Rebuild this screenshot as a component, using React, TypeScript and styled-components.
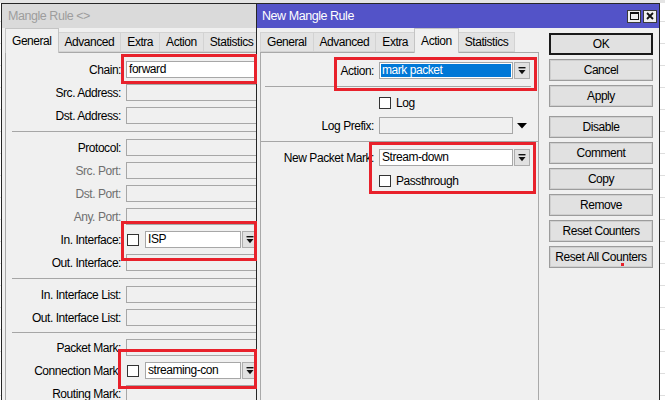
import React from 'react';
import styled, { createGlobalStyle } from 'styled-components';

const GlobalStyle = createGlobalStyle`
  html, body {
    margin: 0;
    padding: 0;
  }
  body {
    background: #ffffff;
    font-family: "Liberation Sans", Arial, sans-serif;
    font-size: 12px;
    letter-spacing: -0.45px;
    color: #000;
  }
`;

const Desktop = styled.div`
  position: relative;
  width: 665px;
  height: 400px;
  overflow: hidden;
  background:
    linear-gradient(to bottom, #e4e4e4 0 3px, transparent 3px),
    repeating-linear-gradient(to bottom, #ffffff 0 21px, #dedede 21px 22px);
`;

const Window = styled.div<{ $left: number; $width: number; $front?: boolean }>`
  position: absolute;
  top: 3px;
  left: ${(p) => p.$left}px;
  width: ${(p) => p.$width}px;
  height: 420px;
  box-sizing: border-box;
  border: 1px solid #262626;
  background: #f0f0f0;
  display: flex;
  flex-direction: column;
  z-index: ${(p) => (p.$front ? 2 : 1)};
`;

const TitleBar = styled.div<{ $active?: boolean }>`
  height: 24px;
  flex: none;
  display: flex;
  align-items: center;
  justify-content: space-between;
  padding: 0 2px 0 ${(p) => (p.$active ? 5 : 6)}px;
  background: ${(p) => (p.$active ? '#5353c8' : '#dadada')};
  color: ${(p) => (p.$active ? '#ffffff' : '#9d9d9d')};
  font-size: 12.5px;
  white-space: nowrap;
`;

const TitleButtons = styled.div`
  display: flex;
  gap: 2px;
`;

const TitleButton = styled.div`
  width: 14px;
  height: 13px;
  box-sizing: border-box;
  border: 1px solid #3a3a3a;
  background: #efefef;
  display: flex;
  align-items: center;
  justify-content: center;
`;

const Body = styled.div`
  flex: 1;
  display: flex;
  min-height: 0;
`;

const TabColumn = styled.div<{ $width?: number }>`
  margin-left: 3px;
  width: ${(p) => (p.$width ? `${p.$width}px` : 'auto')};
  flex: ${(p) => (p.$width ? 'none' : '1')};
  display: flex;
  flex-direction: column;
  min-width: 0;
`;

const TabStrip = styled.div`
  height: 24px;
  display: flex;
  align-items: flex-end;
  flex: none;
`;

const Tab = styled.div<{ $active?: boolean }>`
  position: relative;
  z-index: ${(p) => (p.$active ? 1 : 0)};
  box-sizing: border-box;
  height: ${(p) => (p.$active ? 25 : 20)}px;
  margin-bottom: ${(p) => (p.$active ? -1 : 0)}px;
  padding: 0 6px;
  display: flex;
  align-items: center;
  white-space: nowrap;
  background: ${(p) => (p.$active ? '#f0f0f0' : '#e3e3e3')};
  border: 1px solid ${(p) => (p.$active ? '#c4c4c4' : '#d3d3d3')};
  border-bottom: ${(p) => (p.$active ? 'none' : '1px solid #d3d3d3')};
  margin-right: -1px;
  flex: none;
`;

const Panel = styled.div<{ $pad: number }>`
  flex: 1;
  border: 1px solid #a9a9a9;
  border-bottom: none;
  padding-top: ${(p) => p.$pad}px;
  background: #f0f0f0;
`;

const FormRow = styled.div<{ $labelWidth: number }>`
  height: 23px;
  display: grid;
  grid-template-columns: ${(p) => p.$labelWidth}px 1fr;
  column-gap: 5px;
  align-items: center;
`;

const Label = styled.div<{ $dim?: boolean }>`
  text-align: right;
  white-space: nowrap;
  color: ${(p) => (p.$dim ? '#6f6f6f' : '#000')};
`;

const TextBox = styled.div<{ $white?: boolean; $width?: number; $selected?: boolean }>`
  box-sizing: border-box;
  height: 17px;
  width: ${(p) => (p.$width ? `${p.$width}px` : 'auto')};
  flex: ${(p) => (p.$width ? 'none' : '1')};
  border: 1px solid #a7a7a7;
  background: ${(p) => (p.$white ? '#ffffff' : '#f0f0f0')};
  padding: ${(p) => (p.$selected ? '1px' : '0 2px')};
  line-height: 15px;
  white-space: nowrap;
  overflow: hidden;
`;

const Selected = styled.div`
  height: 13px;
  line-height: 13px;
  padding: 0 1px;
  background: #0078d7;
  color: #fff;
`;

const Field = styled.div`
  display: flex;
  align-items: center;
  min-width: 0;
`;

const Box = styled.div`
  width: 12px;
  height: 12px;
  box-sizing: border-box;
  border: 1px solid #333;
  background: #fff;
  flex: none;
`;

const CheckLine = styled.label`
  display: flex;
  align-items: center;
  gap: 5px;
  white-space: nowrap;
`;

const DropButton = styled.div`
  width: 16px;
  height: 17px;
  box-sizing: border-box;
  margin-left: 1px;
  flex: none;
  border: 1px solid #adadad;
  background: #e1e1e1;
  display: flex;
  align-items: center;
  justify-content: center;
`;

const ArrowSlot = styled.div`
  width: 16px;
  margin-left: 1px;
  display: flex;
  justify-content: center;
`;

const Separator = styled.div<{ $inset: number; $right?: number; $gap?: number }>`
  height: 1px;
  margin: ${(p) => p.$gap ?? 4}px ${(p) => p.$right ?? 0}px ${(p) => p.$gap ?? 4}px
    ${(p) => p.$inset}px;
  background: #a6a6a6;
`;

const ButtonColumn = styled.div`
  margin-left: 10px;
  width: 104px;
  flex: none;
  padding-top: 5px;
  display: flex;
  flex-direction: column;
  gap: 4px;
`;

const Button = styled.div<{ $default?: boolean; $spaced?: boolean }>`
  height: 22px;
  box-sizing: border-box;
  margin-top: ${(p) => (p.$spaced ? 5 : 0)}px;
  border: ${(p) => (p.$default ? '2px solid #1a1a1a' : '1px solid #9c9c9c')};
  box-shadow: ${(p) => (p.$default ? 'none' : 'inset 0 0 0 1px #cfcfcf')};
  background: #e1e1e1;
  display: flex;
  align-items: center;
  justify-content: center;
  white-space: nowrap;
`;

const Highlight = styled.div<{ $x: number; $y: number; $w: number; $h: number }>`
  position: absolute;
  left: ${(p) => p.$x}px;
  top: ${(p) => p.$y}px;
  width: ${(p) => p.$w}px;
  height: ${(p) => p.$h}px;
  box-sizing: border-box;
  border: 3px solid #e8212b;
  z-index: 5;
  pointer-events: none;
`;

const Dot = styled.div`
  position: absolute;
  left: 621px;
  top: 263px;
  width: 3px;
  height: 3px;
  background: #e8212b;
  z-index: 5;
`;

const ComboIcon = () => (
  <svg width="8" height="8" viewBox="0 0 8 8">
    <rect x="0.5" y="0" width="7" height="1.4" fill="#111" />
    <path d="M0.5 3 H7.5 L4 7.2 Z" fill="#111" />
  </svg>
);

const DownTriangle = () => (
  <svg width="10" height="6" viewBox="0 0 10 6">
    <path d="M0 0 H10 L5 5.5 Z" fill="#000" />
  </svg>
);

const MaxIcon = () => (
  <svg width="9" height="8" viewBox="0 0 9 8">
    <rect x="0.5" y="0.5" width="8" height="7" fill="none" stroke="#111" />
    <rect x="0.5" y="0.5" width="8" height="1.5" fill="#111" />
  </svg>
);

const CloseIcon = () => (
  <svg width="8" height="8" viewBox="0 0 8 8">
    <path d="M1 1 L7 7 M7 1 L1 7" stroke="#111" strokeWidth="1.8" />
  </svg>
);

type LeftField = {
  label: string;
  dim?: boolean;
  value?: string;
  combo?: string;
};

const leftGroups: LeftField[][] = [
  [{ label: 'Chain:', value: 'forward' }, { label: 'Src. Address:' }, { label: 'Dst. Address:' }],
  [
    { label: 'Protocol:' },
    { label: 'Src. Port:', dim: true },
    { label: 'Dst. Port:', dim: true },
    { label: 'Any. Port:', dim: true },
    { label: 'In. Interface:', combo: 'ISP' },
    { label: 'Out. Interface:' },
  ],
  [{ label: 'In. Interface List:' }, { label: 'Out. Interface List:' }],
  [
    { label: 'Packet Mark:' },
    { label: 'Connection Mark:', combo: 'streaming-con' },
    { label: 'Routing Mark:' },
  ],
];

const tabs = ['General', 'Advanced', 'Extra', 'Action', 'Statistics'];

const buttons = [
  'OK',
  'Cancel',
  'Apply',
  'Disable',
  'Comment',
  'Copy',
  'Remove',
  'Reset Counters',
  'Reset All Counters',
];

const LeftRow: React.FC<{ field: LeftField }> = ({ field }) => (
  <FormRow $labelWidth={115}>
    <Label $dim={field.dim}>{field.label}</Label>
    {field.combo ? (
      <Field>
        <Box style={{ marginLeft: 1, marginRight: 6 }} />
        <TextBox $white $width={96}>
          {field.combo}
        </TextBox>
        <DropButton>
          <ComboIcon />
        </DropButton>
      </Field>
    ) : (
      <Field>
        <TextBox $white={!!field.value}>{field.value}</TextBox>
      </Field>
    )}
  </FormRow>
);

const App: React.FC = () => (
  <>
    <GlobalStyle />
    <Desktop>
      <Window $left={1} $width={330}>
        <TitleBar>Mangle Rule &lt;&gt;</TitleBar>
        <Body>
          <TabColumn>
            <TabStrip>
              {tabs.map((t, i) => (
                <Tab key={t} $active={i === 0}>
                  {t}
                </Tab>
              ))}
            </TabStrip>
            <Panel $pad={5}>
              {leftGroups.map((group, gi) => (
                <React.Fragment key={`group-${gi}`}>
                  {gi > 0 && <Separator $inset={6} $gap={gi === 3 ? 3 : 4} />}
                  {group.map((f) => (
                    <LeftRow key={f.label} field={f} />
                  ))}
                </React.Fragment>
              ))}
            </Panel>
          </TabColumn>
        </Body>
      </Window>

      <Window $left={256} $width={404} $front>
        <TitleBar $active>
          <span>New Mangle Rule</span>
          <TitleButtons>
            <TitleButton>
              <MaxIcon />
            </TitleButton>
            <TitleButton>
              <CloseIcon />
            </TitleButton>
          </TitleButtons>
        </TitleBar>
        <Body>
          <TabColumn $width={279}>
            <TabStrip>
              {tabs.map((t) => (
                <Tab key={t} $active={t === 'Action'}>
                  {t}
                </Tab>
              ))}
            </TabStrip>
            <Panel $pad={6}>
              <FormRow $labelWidth={113}>
                <Label>Action:</Label>
                <Field>
                  <TextBox $white $selected $width={134}>
                    <Selected>mark packet</Selected>
                  </TextBox>
                  <DropButton>
                    <ComboIcon />
                  </DropButton>
                </Field>
              </FormRow>
              <Separator $inset={4} $right={7} />
              <FormRow $labelWidth={113}>
                <span />
                <CheckLine>
                  <Box />
                  Log
                </CheckLine>
              </FormRow>
              <FormRow $labelWidth={113}>
                <Label>Log Prefix:</Label>
                <Field>
                  <TextBox $width={134} />
                  <ArrowSlot>
                    <DownTriangle />
                  </ArrowSlot>
                </Field>
              </FormRow>
              <Separator $inset={0} />
              <FormRow $labelWidth={113}>
                <Label>New Packet Mark:</Label>
                <Field>
                  <TextBox $white $width={134}>
                    Stream-down
                  </TextBox>
                  <DropButton>
                    <ComboIcon />
                  </DropButton>
                </Field>
              </FormRow>
              <FormRow $labelWidth={113}>
                <span />
                <CheckLine>
                  <Box />
                  Passthrough
                </CheckLine>
              </FormRow>
            </Panel>
          </TabColumn>
          <ButtonColumn>
            {buttons.map((b, i) => (
              <Button key={b} $default={i === 0} $spaced={b === 'Disable'}>
                {b}
              </Button>
            ))}
          </ButtonColumn>
        </Body>
      </Window>

      <Highlight $x={121} $y={54} $w={136} $h={30} />
      <Highlight $x={121} $y={221} $w={136} $h={40} />
      <Highlight $x={118} $y={349} $w={139} $h={40} />
      <Highlight $x={334} $y={57} $w={203} $h={34} />
      <Highlight $x={369} $y={142} $w={167} $h={52} />
      <Dot />
    </Desktop>
  </>
);

export default App;
